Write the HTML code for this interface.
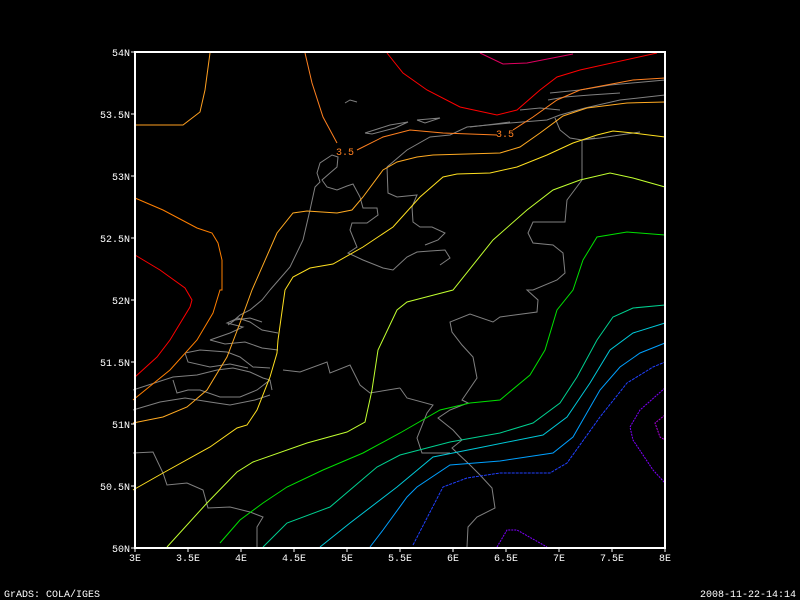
<!DOCTYPE html>
<html><head><style>
html,body{margin:0;padding:0;background:#000;}
svg{display:block;}
text{font-family:"Liberation Mono",monospace;font-size:10px;fill:#fff;}
</style></head><body>
<svg width="800" height="600" viewBox="0 0 800 600" xmlns="http://www.w3.org/2000/svg">
<rect width="800" height="600" fill="#000"/>
<g fill="none" stroke="#808080" stroke-width="1">
<polyline points="270,290 290,267 303,240 310,210 315,187 320,182 317,173 320,163 332,155 338,157 337,167 330,173 322,180 327,187 337,190 347,186 353,184 360,197 363,208 377,208 378,215 367,223 352,223 350,230 357,247 348,253 363,260 383,268 393,270 407,257 417,252 430,251 445,250 450,258 440,265"/>
<polyline points="387,167 388,193 397,197 417,195 412,207 413,222 420,227 432,227 445,233 438,240 425,245"/>
<polyline points="387,167 407,150 430,137 450,135 467,127 510,123 547,120 560,115 585,108 620,100 665,95"/>
<polyline points="365,133 390,125 408,122 395,128 372,134 365,133"/>
<polyline points="417,120 440,118 425,123 417,120"/>
<polyline points="345,103 350,100 357,102"/>
<polyline points="470,127 495,124 510,122"/>
<polyline points="550,93 580,90 610,85 665,80"/>
<polyline points="548,100 565,97 590,95 620,93"/>
<polyline points="520,110 540,108 560,110"/>
<polyline points="582,140 582,180 567,200 565,222 533,222 528,233 533,243 553,245 563,253 565,273 557,280 533,290 527,290 538,300 537,312 500,317 493,322 470,314 450,322 452,332 462,345 473,357 477,378 462,400 468,403 450,410 438,418 453,430 462,440 452,448 470,465 480,475 492,488 495,508 477,517 468,527 467,547"/>
<polyline points="555,118 560,130 570,138 582,140 595,138"/>
<polyline points="400,388 407,398 433,405 427,413 417,438 422,453 450,453"/>
<polyline points="283,370 300,372 327,362 330,373 350,365 360,385 370,393 400,388"/>
<polyline points="133,453 153,452 163,473 167,485 187,483 203,490 208,508 230,507 250,512 263,517 257,527 257,547"/>
<polyline points="133,390 173,377 197,375 217,370 233,368 250,372 263,378 270,380 272,390"/>
<polyline points="173,380 177,393 188,390 200,390 220,397 240,397 257,390 270,380"/>
<polyline points="185,353 200,350 227,352 240,357 253,367 270,368"/>
<polyline points="185,353 188,362 210,367 230,364 248,368"/>
<polyline points="210,340 230,333 243,327 227,323 238,318 250,322 262,330 278,333"/>
<polyline points="210,340 225,344 245,342 262,348 278,350"/>
<polyline points="228,325 235,320 250,318 262,322"/>
<polyline points="133,410 160,402 185,398 210,402 230,405 255,400 270,395"/>
<polyline points="270,290 262,300 250,310 240,315 232,322"/>
<polyline points="582,140 600,138 620,135 640,132"/>
</g>
<g fill="none" stroke-width="1">
<path stroke="#ff0000" d="M135,255 L160,270 L185,288 L192,300 L190,307 L170,340 L157,357 L135,377"/>
<path stroke="#ff7f00" d="M135,198 L163,210 L197,228 L212,233 L218,243 L222,260 L222,290 L220,290 L213,313 L197,340 L170,370 L133,400"/>
<path stroke="#ffa020" d="M210,53 L205,90 L200,112 L183,125 L135,125"/>
<path stroke="#ffaa22" d="M133,423 L163,417 L187,407 L207,390 L227,357 L240,323 L252,290 L277,233 L293,213 L307,211 L337,213 L352,210 L363,197 L383,170 L397,162 L417,157 L433,155 L500,153 L520,147 L540,133 L563,116 L587,108 L627,103 L665,102"/>
<path stroke="#ff8020" d="M305,53 L312,83 L323,117 L337,143 M357,150 L383,137 L410,130 L443,133 L497,135 M513,130 L533,117 L557,100 L580,90 L633,80 L665,78"/>
<path stroke="#ffe020" d="M133,490 L163,473 L210,447 L237,428 L247,425 L257,410 L270,377 L277,353 L278,340 L285,290 L293,277 L310,268 L333,264 L363,247 L393,227 L420,197 L443,177 L457,174 L490,173 L517,167 L547,155 L573,143 L597,135 L613,131 L633,133 L665,137"/>
<path stroke="#c0ff30" d="M167,547 L207,503 L237,472 L253,462 L307,443 L347,432 L365,422 L372,390 L378,350 L397,310 L407,302 L430,296 L453,290 L493,240 L527,210 L553,190 L580,180 L610,173 L633,178 L665,187"/>
<path stroke="#00e000" d="M220,543 L240,520 L263,503 L287,487 L323,470 L363,453 L400,433 L440,410 L470,403 L500,400 L530,375 L545,350 L557,310 L573,290 L583,260 L597,237 L627,232 L665,235"/>
<path stroke="#00d090" d="M263,547 L287,523 L330,507 L377,467 L400,455 L450,442 L500,433 L533,423 L560,403 L577,377 L597,340 L613,317 L633,308 L665,305"/>
<path stroke="#00c8d8" d="M320,547 L350,523 L397,487 L433,457 L483,447 L543,435 L567,417 L590,383 L610,350 L633,333 L665,323"/>
<path stroke="#00a0ff" d="M370,547 L383,530 L407,497 L417,487 L450,465 L500,461 L553,453 L573,437 L600,390 L620,367 L640,353 L665,343"/>
<path stroke="#2040ff" stroke-dasharray="3,1" d="M413,545 L443,487 L467,478 L500,473 L550,473 L567,463 L600,417 L627,383 L653,367 L665,362"/>
<path stroke="#8000ff" stroke-dasharray="2,1" d="M665,388 L640,410 L630,427 L633,440 L653,470 L665,483"/>
<path stroke="#8000ff" stroke-dasharray="2,1" d="M497,547 L507,530 L517,530 L547,547"/>
<path stroke="#b000e0" stroke-dasharray="2,1" d="M665,415 L655,423 L660,437 L665,440"/>
<path stroke="#ff0000" d="M387,53 L403,73 L427,90 L460,107 L497,115 L517,110 L540,90 L557,77 L580,70 L657,53"/>
<path stroke="#e00060" d="M480,53 L503,64 L527,63 L573,54"/>
</g>
<text x="336" y="155" style="fill:#ff8020">3.5</text>
<text x="496" y="137" style="fill:#ff8020">3.5</text>
<rect x="135" y="52" width="530" height="496" fill="none" stroke="#fff" stroke-width="2"/>
<g stroke="#fff" stroke-width="1">
<path d="M131,52H135M131,114H135M131,176H135M131,238H135M131,300H135M131,362H135M131,424H135M131,486H135M131,548H135"/>
<path d="M135,548V552M188,548V552M241,548V552M294,548V552M347,548V552M400,548V552M453,548V552M506,548V552M559,548V552M612,548V552M665,548V552"/>
</g>
<g text-anchor="end">
<text x="130" y="56">54N</text>
<text x="130" y="118">53.5N</text>
<text x="130" y="180">53N</text>
<text x="130" y="242">52.5N</text>
<text x="130" y="304">52N</text>
<text x="130" y="366">51.5N</text>
<text x="130" y="428">51N</text>
<text x="130" y="490">50.5N</text>
<text x="130" y="552">50N</text>
</g>
<g text-anchor="middle">
<text x="135" y="561">3E</text>
<text x="188" y="561">3.5E</text>
<text x="241" y="561">4E</text>
<text x="294" y="561">4.5E</text>
<text x="347" y="561">5E</text>
<text x="400" y="561">5.5E</text>
<text x="453" y="561">6E</text>
<text x="506" y="561">6.5E</text>
<text x="559" y="561">7E</text>
<text x="612" y="561">7.5E</text>
<text x="665" y="561">8E</text>
</g>
<text x="4" y="597">GrADS: COLA/IGES</text>
<text x="796" y="597" text-anchor="end">2008-11-22-14:14</text>
</svg>
</body></html>
